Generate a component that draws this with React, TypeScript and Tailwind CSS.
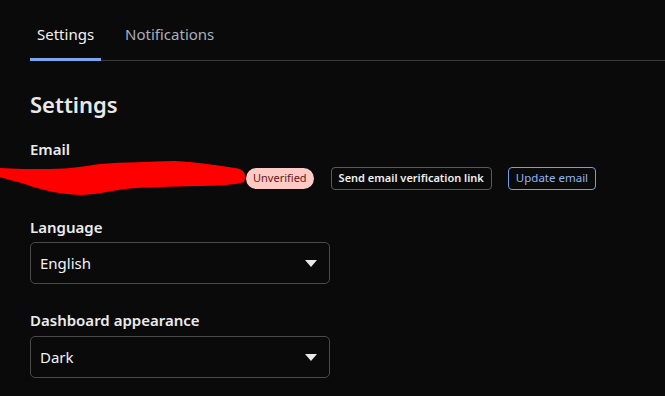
import { ChevronDown } from "lucide-react";

function Caret() {
  return (
    <svg width="12" height="7" viewBox="0 0 12 7" className="shrink-0">
      <path d="M0 0 L12 0 L6 7 Z" fill="#e8e8e8" />
    </svg>
  );
}

function SelectBox({ value }: { value: string }) {
  return (
    <div className="flex items-center justify-between w-[300px] h-[42px] rounded-[5px] border border-[#4a4a4a] pl-[9px] pr-[12px] text-[15px] text-[#f2f2f2]">
      <span>{value}</span>
      <Caret />
    </div>
  );
}

// Red marker scribble that hides the address in the screenshot.
function Scribble() {
  return (
    <svg
      width="250"
      height="40"
      viewBox="0 0 250 40"
      className="absolute left-[-30px] top-[-6px] pointer-events-none"
    >
      <path
        d="M0 8 C15 9 30 9 50 9 C70 9 85 6 100 4 C125 2 150 2 175 1 C195 2 215 5 235 8 C244 9 247 14 244 22 C235 25 215 26 195 26 C170 27 145 27 125 29 C110 31 95 35 80 35 C60 34 40 30 25 24 C15 21 6 19 0 17 Z"
        fill="#ff0000"
      />
    </svg>
  );
}

export default function App() {
  const tabs = ["Settings", "Notifications"];
  const active = "Settings";

  return (
    <div className="w-full h-[396px] overflow-hidden bg-[#0a0a0a] pl-[30px] font-['Segoe_UI','Noto_Sans',sans-serif] text-[#e6e6e6]">
      <div className="flex gap-[16px] border-b border-[#3a3a3a] h-[61px]">
        {tabs.map((t) => (
          <div
            key={t}
            className={
              t === active
                ? "flex items-center px-[7px] h-[61px] border-b-[3px] border-[#7aa8f0] text-[15px] text-[#f2f2f2] pt-[10px]"
                : "flex items-center px-[8px] h-[61px] border-b-[3px] border-transparent text-[15px] text-[#a9b0bd] pt-[10px]"
            }
          >
            {t}
          </div>
        ))}
      </div>

      <h1 className="mt-[29px] text-[22px] leading-[28px] font-semibold text-[#e8e8e8]">Settings</h1>

      <div className="mt-[21px] text-[15px] leading-[20px] font-semibold text-[#ececec]">Email</div>
      <div className="mt-[7px] flex items-center h-[24px]">
        <div className="relative w-[216px] h-[24px] text-[13px] text-[#cfcfcf]">
          <span className="leading-[24px]">user@example.com</span>
          <Scribble />
        </div>
        <span className="h-[21px] flex items-center rounded-full bg-[#fecac6] px-[7px] text-[11px] text-[#6b1414]">
          Unverified
        </span>
        <button className="ml-[17px] h-[23px] px-[7px] rounded-[4px] border border-[#5a5a5a] text-[11px] font-semibold text-[#f0f0f0]">
          Send email verification link
        </button>
        <button className="ml-[16px] h-[23px] px-[7px] rounded-[4px] border border-[#6f9fea] text-[11.5px] text-[#8fb6f6]">
          Update email
        </button>
      </div>

      <div className="mt-[27px] text-[15px] leading-[20px] font-semibold text-[#ececec]">Language</div>
      <div className="mt-[5px]">
        <SelectBox value="English" />
      </div>

      <div className="mt-[26px] text-[15px] leading-[20px] font-semibold text-[#ececec]">Dashboard appearance</div>
      <div className="mt-[6px]">
        <SelectBox value="Dark" />
      </div>
      <span className="hidden">
        <ChevronDown />
      </span>
    </div>
  );
}
